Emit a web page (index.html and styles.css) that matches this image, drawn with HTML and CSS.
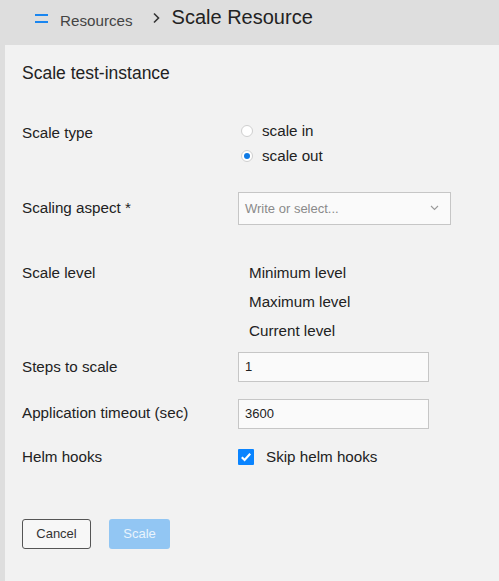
FILE: index.html
```html
<!DOCTYPE html>
<html lang="en">
<head>
<meta charset="utf-8">
<title>Scale Resource</title>
<link rel="stylesheet" href="styles.css">
</head>
<body>
<header class="topbar">
  <span class="menu-icon"><span></span><span></span></span>
  <span class="crumb">Resources</span>
  <svg class="crumb-sep" width="8" height="12" viewBox="0 0 8 12"><path d="M2 1.5 L6.5 6 L2 10.5" fill="none" stroke="#333" stroke-width="1.6"/></svg>
  <h1 class="page-title">Scale Resource</h1>
</header>
<main class="panel">
  <h2 class="form-title">Scale test-instance</h2>
  <div class="form">
    <div class="row row-type">
      <div class="label">Scale type</div>
      <div class="control radios">
        <label class="radio"><span class="dot"></span>scale in</label>
        <label class="radio"><span class="dot on"></span>scale out</label>
      </div>
    </div>
    <div class="row row-aspect">
      <div class="label">Scaling aspect *</div>
      <div class="control">
        <div class="select"><span class="placeholder">Write or select...</span>
          <svg class="chev" width="9" height="6" viewBox="0 0 9 6"><path d="M1 1 L4.5 4.5 L8 1" fill="none" stroke="#9a9a9a" stroke-width="1.1"/></svg>
        </div>
      </div>
    </div>
    <div class="row row-level">
      <div class="label">Scale level</div>
      <div class="control levels">
        <div>Minimum level</div>
        <div>Maximum level</div>
        <div>Current level</div>
      </div>
    </div>
    <div class="row row-steps">
      <div class="label">Steps to scale</div>
      <div class="control"><div class="input">1</div></div>
    </div>
    <div class="row row-timeout">
      <div class="label">Application timeout (sec)</div>
      <div class="control"><div class="input">3600</div></div>
    </div>
    <div class="row row-helm">
      <div class="label">Helm hooks</div>
      <div class="control check">
        <span class="box"><svg width="16" height="16" viewBox="0 0 16 16"><path d="M3.8 8.2 L6.6 11 L12.2 4.8" fill="none" stroke="#fff" stroke-width="2.2"/></svg></span>
        <span>Skip helm hooks</span>
      </div>
    </div>
  </div>
  <div class="actions">
    <button class="btn btn-cancel">Cancel</button>
    <button class="btn btn-primary" disabled>Scale</button>
  </div>
</main>
</body>
</html>
```
FILE: styles.css
```css
html, body {
  margin: 0;
  padding: 0;
}
body {
  background: #dedede;
  font-family: "Liberation Sans", Arial, sans-serif;
  color: #222;
  width: 499px;
  height: 581px;
  overflow: hidden;
}
.topbar {
  height: 45px;
  display: flex;
  align-items: flex-start;
  padding-left: 35px;
  box-sizing: border-box;
}
.menu-icon {
  display: flex;
  flex-direction: column;
  gap: 5px;
  margin-top: 14px;
  width: 13px;
}
.menu-icon span {
  display: block;
  height: 2px;
  background: #1a86f0;
}
.crumb {
  margin-left: 12px;
  margin-top: 12px;
  font-size: 15.2px;
  line-height: 18px;
  color: #444;
}
.crumb-sep {
  margin-left: 19px;
  margin-top: 12px;
}
.page-title {
  margin: 5px 0 0 12px;
  font-size: 20px;
  line-height: 24px;
  font-weight: normal;
  color: #222;
}
.panel {
  margin-left: 5px;
  background: #f2f2f2;
  height: 536px;
  padding: 16px 0 0 17px;
  box-sizing: border-box;
}
.form-title {
  margin: 0;
  font-size: 17.5px;
  line-height: 24px;
  font-weight: normal;
  color: #222;
}
.form {
  display: flex;
  flex-direction: column;
}
.row {
  display: flex;
  align-items: flex-start;
}
.label {
  width: 216px;
  font-size: 15.2px;
  line-height: 18px;
  flex: none;
}
.control {
  font-size: 15.2px;
}
.row-type { margin-top: 32px; }
.row-type .label { padding-top: 7px; }
.radios {
  display: flex;
  flex-direction: column;
  padding-top: 1px;
}
.radio {
  display: flex;
  align-items: center;
  height: 25px;
  padding-left: 3px;
}
.dot {
  width: 12px;
  height: 12px;
  box-sizing: border-box;
  border: 1px solid #cfcfcf;
  border-radius: 50%;
  background: #fff;
  margin-right: 9px;
  position: relative;
}
.dot.on::after {
  content: "";
  position: absolute;
  left: 2px;
  top: 2px;
  width: 6px;
  height: 6px;
  border-radius: 50%;
  background: #0f7ae5;
}
.row-aspect { margin-top: 23.5px; }
.row-aspect .label { padding-top: 7.5px; }
.select {
  width: 213px;
  height: 33px;
  box-sizing: border-box;
  border: 1px solid #c6c6c6;
  background: #fafafa;
  display: flex;
  align-items: center;
  justify-content: space-between;
  padding: 0 11px 0 6px;
}
.placeholder {
  font-size: 13px;
  color: #8a8a8a;
}
.row-level { margin-top: 33.5px; }
.row-level .label { line-height: 29px; }
.levels {
  padding-left: 11px;
  line-height: 29px;
}
.input {
  width: 191px;
  height: 30px;
  box-sizing: border-box;
  border: 1px solid #c6c6c6;
  background: #fafafa;
  font-size: 13px;
  line-height: 28px;
  padding-left: 6px;
  color: #222;
}
.row-steps { margin-top: 6.5px; }
.row-steps .label { line-height: 30px; }
.row-timeout { margin-top: 17px; }
.row-timeout .label { line-height: 28px; }
.row-helm { margin-top: 18px; }
.row-helm .label { line-height: 20px; }
.check {
  display: flex;
  align-items: center;
  height: 20px;
}
.box {
  width: 16px;
  height: 16px;
  background: #0a84ff;
  border-radius: 1px;
  margin-right: 12px;
  display: block;
}
.box svg { display: block; }
.actions {
  display: flex;
  gap: 18px;
  margin-top: 52px;
}
.btn {
  height: 30px;
  border-radius: 3px;
  font-family: "Liberation Sans", Arial, sans-serif;
  font-size: 13px;
  padding: 0;
  box-sizing: border-box;
}
.btn-cancel {
  width: 69px;
  border: 1px solid #555;
  background: #f7f7f7;
  color: #333;
}
.btn-primary {
  width: 61px;
  border: none;
  background: #92c6f3;
  color: #e9f4fd;
}
```
